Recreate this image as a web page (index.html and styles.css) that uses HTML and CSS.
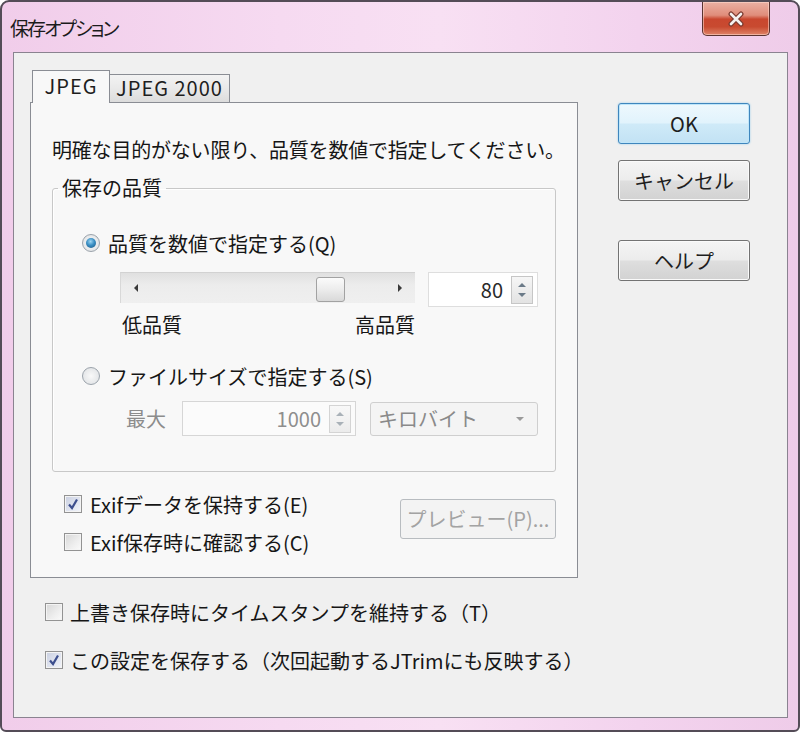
FILE: index.html
```html
<!DOCTYPE html>
<html lang="ja">
<head>
<meta charset="utf-8">
<title>保存オプション</title>
<link rel="stylesheet" href="styles.css">
</head>
<body>
<div class="window">
  <div class="titlebar">
    <span class="title">保存オプション</span>
    <button class="close" aria-label="閉じる">
      <svg width="18" height="16" viewBox="0 0 18 16"><path d="M4 3 L14 13 M14 3 L4 13" stroke="#7a3a30" stroke-width="5" stroke-linecap="round"/><path d="M4 3 L14 13 M14 3 L4 13" stroke="#f4f0f0" stroke-width="2.6" stroke-linecap="round"/></svg>
    </button>
  </div>
  <div class="client">
    <div class="main">
      <div class="tabs">
        <div class="tab active">JPEG</div>
        <div class="tab">JPEG 2000</div>
      </div>
      <div class="panel">
        <p class="intro">明確な目的がない限り、品質を数値で指定してください。</p>
        <fieldset class="group">
          <legend>保存の品質</legend>
          <label class="radio-row first"><span class="radio checked"></span>品質を数値で指定する(Q)</label>
          <div class="slider-row">
            <div class="slider">
              <span class="arrow-left"></span>
              <span class="thumb"></span>
              <span class="arrow-right"></span>
            </div>
            <div class="spin">
              <span class="val">80</span>
              <span class="spin-btn"><span class="up"></span><span class="down"></span></span>
            </div>
          </div>
          <div class="scale-labels"><span>低品質</span><span>高品質</span></div>
          <label class="radio-row second"><span class="radio"></span>ファイルサイズで指定する(S)</label>
          <div class="max-row">
            <span class="max-label">最大</span>
            <div class="spin wide disabled">
              <span class="val">1000</span>
              <span class="spin-btn"><span class="up"></span><span class="down"></span></span>
            </div>
            <div class="select">
              <span>キロバイト</span>
              <span class="caret"></span>
            </div>
          </div>
        </fieldset>
        <div class="exif">
          <div class="checks">
            <label class="check-row"><span class="check checked"><svg width="14" height="14" viewBox="0 0 14 14"><path d="M3 7.5 L6 11 L11 2.5" fill="none" stroke="#3d4f8e" stroke-width="2.2"/></svg></span>Exifデータを保持する(E)</label>
            <label class="check-row"><span class="check"></span>Exif保存時に確認する(C)</label>
          </div>
          <button class="btn preview" disabled>プレビュー(P)...</button>
        </div>
      </div>
      <div class="options">
        <label class="check-row"><span class="check"></span>上書き保存時にタイムスタンプを維持する（T）</label>
        <label class="check-row"><span class="check checked"><svg width="14" height="14" viewBox="0 0 14 14"><path d="M3 7.5 L6 11 L11 2.5" fill="none" stroke="#3d4f8e" stroke-width="2.2"/></svg></span>この設定を保存する（次回起動するJTrimにも反映する）</label>
      </div>
    </div>
    <div class="side">
      <button class="btn default">OK</button>
      <button class="btn cancel">キャンセル</button>
      <button class="btn help">ヘルプ</button>
    </div>
  </div>
</div>
</body>
</html>
```
FILE: styles.css
```css
* { box-sizing: border-box; }

html, body {
  margin: 0;
  padding: 0;
}

body {
  width: 800px;
  height: 732px;
  overflow: hidden;
  background: #ffffff;
  font-family: "Noto Sans CJK JP", "Noto Sans", sans-serif;
  color: #161616;
}

.window {
  width: 800px;
  height: 732px;
  border: 2px solid #544c57;
  border-radius: 9px 9px 6px 6px;
  background: linear-gradient(90deg, #f1cdea 0%, #f6daf1 35%, #f8e0f3 55%, #f3d3ee 80%, #efcce9 100%);
  display: flex;
  flex-direction: column;
}

.titlebar {
  height: 50px;
  display: flex;
  justify-content: space-between;
  align-items: flex-start;
  flex-shrink: 0;
}

.title {
  padding: 11px 0 0 8px;
  font-size: 19px;
  line-height: 30px;
  color: #1b1b1b;
  font-feature-settings: "palt";
  letter-spacing: -2px;
}

.close {
  width: 68px;
  height: 34px;
  margin-right: 28px;
  padding: 0;
  border: 1px solid #5a3431;
  border-top: none;
  border-radius: 0 0 5px 5px;
  background: linear-gradient(180deg, #eab0a3 0%, #e08d7b 40%, #c9472f 52%, #c84a30 75%, #df8468 100%);
  box-shadow: inset 0 0 0 1px rgba(255, 220, 210, 0.55);
  display: flex;
  align-items: center;
  justify-content: center;
}

.client {
  flex: 1;
  margin: 0 10px 12px 11px;
  border: 1px solid #8a8390;
  background: #f0f0f0;
  display: flex;
  padding: 17px 0 0 16px;
  font-size: 20px;
}

.main {
  width: 548px;
  flex-shrink: 0;
}

.tabs {
  display: flex;
  align-items: flex-end;
  height: 33px;
  margin-bottom: -1px;
  position: relative;
  z-index: 1;
}

.tab {
  font-size: 20px;
  line-height: 27px;
  text-align: center;
  color: #1e1e1e;
  letter-spacing: 1px;
}

.tab.active {
  margin-left: 2px;
  width: 78px;
  height: 33px;
  border: 1px solid #8a8d94;
  border-bottom: none;
  background: #f8f8f8;
  padding-top: 1px;
}

.tab:not(.active) {
  width: 120px;
  height: 28px;
  margin-bottom: 1px;
  border: 1px solid #8a8d94;
  border-left: none;
  border-bottom: none;
  background: linear-gradient(180deg, #f3f3f3 0%, #e9e9e9 50%, #dcdcdc 100%);
  line-height: 26px;
}

.panel {
  height: 476px;
  border: 1px solid #8a8d94;
  background: #f8f8f8;
  padding: 0 21px;
}

.intro {
  margin: 0;
  padding-top: 33px;
  line-height: 28px;
  font-size: 20px;
  white-space: nowrap;
  letter-spacing: -0.2px;
}

.group {
  margin: 10px 0 0 0;
  padding: 0;
  border: 1px solid #c8c8c8;
  border-radius: 3px;
  box-shadow: inset 1px 1px 0 #ffffff;
}

.group legend {
  margin-left: 5px;
  padding: 0 4px;
  line-height: 28px;
  font-size: 20px;
}

.radio-row {
  display: flex;
  align-items: center;
  height: 28px;
  padding-left: 29px;
  white-space: nowrap;
}

.radio-row.first { margin-top: 27px; }
.radio-row.second { margin-top: 23px; }

.radio {
  width: 18px;
  height: 18px;
  margin-right: 8px;
  border-radius: 50%;
  border: 1px solid #9ba3ab;
  background: radial-gradient(circle at 50% 50%, #f9f9f9 0%, #dcdfe2 100%);
  display: flex;
  align-items: center;
  justify-content: center;
  flex-shrink: 0;
}

.radio.checked::after {
  content: "";
  width: 10px;
  height: 10px;
  border-radius: 50%;
  background: radial-gradient(circle at 45% 35%, #9fd6f2 0%, #3a8fc4 45%, #1c557f 100%);
}

.slider-row {
  display: flex;
  align-items: flex-start;
  margin-top: 15px;
  padding-left: 67px;
}

.slider {
  position: relative;
  width: 295px;
  height: 31px;
  background: linear-gradient(180deg, #e0e0e0 0%, #ececec 40%, #efefef 100%);
  border-top: 1px solid #d2d2d2;
  border-left: 1px solid #d8d8d8;
  display: flex;
  align-items: center;
  justify-content: space-between;
  padding: 0 13px 0 13px;
}

.arrow-left {
  width: 0;
  height: 0;
  border-top: 4px solid transparent;
  border-bottom: 4px solid transparent;
  border-right: 4px solid #3a3a3a;
}

.arrow-right {
  width: 0;
  height: 0;
  border-top: 4px solid transparent;
  border-bottom: 4px solid transparent;
  border-left: 4px solid #3a3a3a;
}

.thumb {
  position: absolute;
  left: 195px;
  top: 4px;
  width: 29px;
  height: 25px;
  border: 1px solid #a2a2a2;
  border-radius: 3px;
  background: linear-gradient(180deg, #fbfbfb 0%, #ececec 50%, #d9d9d9 100%);
}

.spin {
  display: flex;
  align-items: center;
  justify-content: flex-end;
  margin-left: 13px;
  width: 110px;
  height: 35px;
  border: 1px solid #dedede;
  background: #ffffff;
  padding-right: 4px;
}

.spin .val {
  font-size: 20px;
  line-height: 28px;
  margin-right: 8px;
  color: #2a2a2a;
}

.spin-btn {
  width: 22px;
  height: 28px;
  border: 1px solid #c6c6c6;
  background: linear-gradient(180deg, #f6f6f6, #e3e3e3);
  display: flex;
  flex-direction: column;
  align-items: center;
  justify-content: space-around;
  padding: 3px 0;
}

.spin-btn .up {
  width: 0;
  height: 0;
  border-left: 4px solid transparent;
  border-right: 4px solid transparent;
  border-bottom: 4px solid #6b7a88;
}

.spin-btn .down {
  width: 0;
  height: 0;
  border-left: 4px solid transparent;
  border-right: 4px solid transparent;
  border-top: 4px solid #6b7a88;
}

.scale-labels {
  display: flex;
  justify-content: space-between;
  width: 362px;
  margin-top: 4px;
  padding-left: 69px;
  line-height: 28px;
  height: 28px;
}

.max-row {
  display: flex;
  align-items: center;
  margin-top: 11px;
  margin-bottom: 35px;
  padding-left: 73px;
  height: 35px;
  color: #8c8c8c;
}

.max-label {
  width: 56px;
  flex-shrink: 0;
}

.spin.wide {
  margin-left: 0;
  width: 174px;
  border-color: #d6d6d6;
  background: #fbfbfb;
}

.spin.disabled .val {
  color: #8e8e8e;
}

.spin.disabled .spin-btn {
  border-color: #d4d4d4;
  background: linear-gradient(180deg, #f8f8f8, #ececec);
}

.spin.disabled .spin-btn .up { border-bottom-color: #a9b1b8; }
.spin.disabled .spin-btn .down { border-top-color: #a9b1b8; }

.select {
  margin-left: 14px;
  width: 168px;
  height: 34px;
  border: 1px solid #cfcfcf;
  border-radius: 3px;
  background: #f4f4f4;
  display: flex;
  align-items: center;
  justify-content: space-between;
  padding: 0 13px 0 7px;
  color: #8a8a8a;
}

.caret {
  width: 0;
  height: 0;
  border-left: 4px solid transparent;
  border-right: 4px solid transparent;
  border-top: 4px solid #9a9a9a;
}

.exif {
  display: flex;
  justify-content: space-between;
  align-items: flex-start;
  margin-top: 18px;
}

.checks {
  display: flex;
  flex-direction: column;
  gap: 10px;
  padding-left: 12px;
}

.check-row {
  display: flex;
  align-items: center;
  height: 28px;
  white-space: nowrap;
}

.check {
  width: 18px;
  height: 18px;
  margin-right: 8px;
  flex-shrink: 0;
  border: 1px solid #939393;
  background: linear-gradient(135deg, #d7d7d7 0%, #eeeeee 60%, #fafafa 100%);
  box-shadow: inset 0 0 0 1px #f4f4f4;
  display: flex;
  align-items: center;
  justify-content: center;
}

.check.checked {
  background: linear-gradient(135deg, #c9cfe0 0%, #e2e6f1 60%, #f3f5fa 100%);
}

.btn {
  font-family: "Noto Sans CJK JP", "Noto Sans", sans-serif;
  font-size: 20px;
  color: #1e1e1e;
  border: 1px solid #737373;
  border-radius: 3px;
  background: linear-gradient(180deg, #f4f4f4 0%, #ececec 48%, #dedede 52%, #d2d2d2 100%);
  box-shadow: inset 0 0 0 1px #fafafa;
  padding: 0;
  line-height: 28px;
}

.btn.preview {
  width: 156px;
  height: 40px;
  margin-top: 9px;
  border-color: #b8bcc0;
  background: #f3f3f3;
  box-shadow: none;
  color: #a3a3a3;
}

.options {
  margin-top: 20px;
  padding-left: 15px;
  display: flex;
  flex-direction: column;
  gap: 20px;
}

.options .check {
  margin-right: 7px;
}

.side {
  margin-left: 40px;
  padding-top: 33px;
  width: 132px;
  display: flex;
  flex-direction: column;
}

.side .btn {
  width: 132px;
  height: 41px;
}

.btn.default {
  border-color: #3f86bd;
  background: linear-gradient(180deg, #eef8fd 0%, #e1f3fc 48%, #cfeaf8 52%, #c2e2f4 100%);
  box-shadow: inset 0 0 0 1px #bfe6fa, 0 0 2px #8cc8ea;
}

.btn.cancel { margin-top: 16px; }
.btn.help { margin-top: 39px; }
```
